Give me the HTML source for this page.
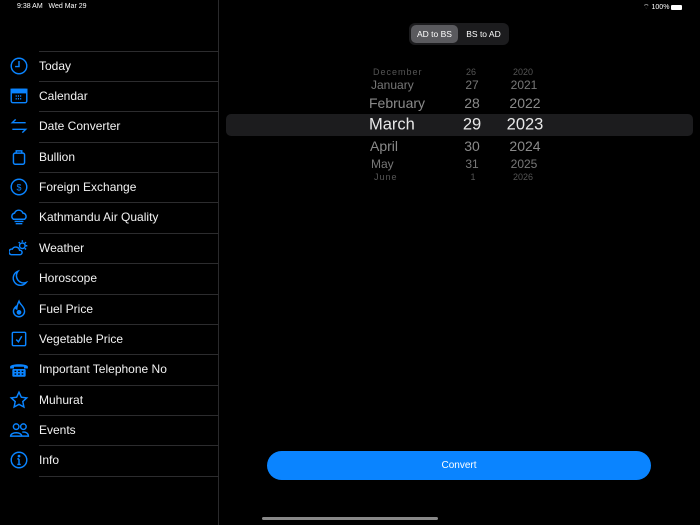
<!DOCTYPE html>
<html><head><meta charset="utf-8"><style>
*{margin:0;padding:0;box-sizing:border-box}
body{width:700px;height:525px;background:#000;font-family:"Liberation Sans",sans-serif;color:#fff;position:relative;overflow:hidden}
.sb{position:absolute;left:0;top:0;width:219px;height:525px;border-right:1px solid #2a2a2c}
.st{position:absolute;top:3px;font-size:7px;color:#fff}
.row{position:absolute;left:0;width:219px;height:30px}
.row .t{position:absolute;left:39px;top:50%;transform:translateY(-50%);font-size:12px;color:#f2f2f2}
.row svg{position:absolute;left:9px;top:5px;width:20px;height:20px;fill:none;stroke:#0a84ff;stroke-width:1.3}
.sep{position:absolute;left:39px;width:180px;height:1px;background:#2c2c2e}
.seg{position:absolute;left:409px;top:23px;width:100px;height:22px;background:#1c1c1e;border-radius:6px}
.seg div{position:absolute;top:2px;height:18px;font-size:8.5px;line-height:18px;text-align:center}
.hl{position:absolute;left:226px;top:114px;width:467px;height:22px;background:#1c1c1e;border-radius:5px}
.p{position:absolute;white-space:nowrap;transform:translate(-50%,-50%)}
.m{position:absolute;white-space:nowrap;transform:translateY(-50%)}
.btn{position:absolute;left:267px;top:451px;width:384px;height:29px;background:#0a84ff;border-radius:15px;text-align:center;line-height:29px;font-size:10px}
.home{position:absolute;left:262px;top:517px;width:176px;height:3px;border-radius:2px;background:#888}
</style></head><body>
<div class="sb">
<div class="st" style="left:17px">9:38 AM&nbsp;&nbsp;&nbsp;Wed Mar 29</div>
<div class="sep" style="top:51px"></div>
<div class="row" style="top:51px"><svg viewBox="0 0 18 18"><circle cx="9" cy="9" r="7"/><path d="M9 4.5V9.5H5.5"/></svg><span class="t">Today</span></div>
<div class="sep" style="top:81px"></div>
<div class="row" style="top:81px"><svg viewBox="0 0 18 18"><rect x="2" y="3" width="14" height="12" rx="1.5"/><rect x="2" y="3" width="14" height="3" fill="#0a84ff"/><path d="M6 9h6M6 11.5h6" stroke-dasharray="1 1"/></svg><span class="t">Calendar</span></div>
<div class="sep" style="top:111px"></div>
<div class="row" style="top:111px"><svg viewBox="0 0 18 18"><path d="M15 6H3l3-3M3 12h12l-3 3"/></svg><span class="t">Date Converter</span></div>
<div class="sep" style="top:142px"></div>
<div class="row" style="top:142px"><svg viewBox="0 0 18 18"><rect x="4" y="5.5" width="10" height="10" rx="1.5"/><path d="M6.5 5.5V3.5h5v2"/></svg><span class="t">Bullion</span></div>
<div class="sep" style="top:172px"></div>
<div class="row" style="top:172px"><svg viewBox="0 0 18 18"><circle cx="9" cy="9" r="7"/><text x="9" y="12" font-size="8" text-anchor="middle" fill="#0a84ff" stroke="none">$</text></svg><span class="t">Foreign Exchange</span></div>
<div class="sep" style="top:202px"></div>
<div class="row" style="top:202px"><svg viewBox="0 0 18 18"><path d="M4 11a3 3 0 0 1 1-5.5 4 4 0 0 1 7.5 0A3 3 0 0 1 14 11ZM5 13h8M6 15h6"/></svg><span class="t">Kathmandu Air Quality</span></div>
<div class="sep" style="top:233px"></div>
<div class="row" style="top:233px"><svg viewBox="0 0 18 18"><path d="M2 15a2.5 2.5 0 0 1 1-5 3.5 3.5 0 0 1 6.5 1A2 2 0 0 1 10 15Z"/><circle cx="12" cy="7" r="2.5"/><path d="M12 2v1.5M16.5 7H15M15.3 3.7l-1 1M8.7 3.7l1 1M15.3 10.3l-1-1"/></svg><span class="t">Weather</span></div>
<div class="sep" style="top:263px"></div>
<div class="row" style="top:263px"><svg viewBox="0 0 18 18"><path d="M8 3a6.5 6.5 0 0 0 7.5 10A6.5 6.5 0 1 1 8 3Z"/></svg><span class="t">Horoscope</span></div>
<div class="sep" style="top:294px"></div>
<div class="row" style="top:294px"><svg viewBox="0 0 18 18"><path d="M9 2c1 3 5 5 5 9a5 5 0 0 1-10 0c0-2 1-3 2-4 0 2 1 2 1 2 0-3 1-5 2-7Z"/><circle cx="9" cy="12" r="1.5" fill="#0a84ff"/></svg><span class="t">Fuel Price</span></div>
<div class="sep" style="top:324px"></div>
<div class="row" style="top:324px"><svg viewBox="0 0 18 18"><rect x="3" y="3" width="12" height="12" rx="1"/><path d="M6.5 9.5l2 2 3-5"/></svg><span class="t">Vegetable Price</span></div>
<div class="sep" style="top:354px"></div>
<div class="row" style="top:354px"><svg viewBox="0 0 18 18" style="fill:#0a84ff;stroke:none"><path d="M1 7c0-3 16-3 16 0v1.5h-3.5V7h-9v1.5H1Z"/><rect x="3" y="9" width="12" height="7" rx="1"/><g fill="#000"><rect x="5" y="10.5" width="1.5" height="1.2"/><rect x="8.2" y="10.5" width="1.5" height="1.2"/><rect x="11.4" y="10.5" width="1.5" height="1.2"/><rect x="5" y="13" width="1.5" height="1.2"/><rect x="8.2" y="13" width="1.5" height="1.2"/><rect x="11.4" y="13" width="1.5" height="1.2"/></g></svg><span class="t">Important Telephone No</span></div>
<div class="sep" style="top:385px"></div>
<div class="row" style="top:385px"><svg viewBox="0 0 18 18"><path d="M9 2l2.1 4.5 4.9.6-3.6 3.3 1 4.9L9 12.9l-4.4 2.4 1-4.9L2 7.1l4.9-.6Z"/></svg><span class="t">Muhurat</span></div>
<div class="sep" style="top:415px"></div>
<div class="row" style="top:415px"><svg viewBox="0 0 18 18" style="left:8px;width:23px"><circle cx="6" cy="6" r="2.5"/><circle cx="12.5" cy="6" r="2.5"/><path d="M1 14.5c0-4 10-4 10 0ZM11.5 14.5H17c0-3-3-4-5.5-3.5"/></svg><span class="t">Events</span></div>
<div class="sep" style="top:445px"></div>
<div class="row" style="top:445px"><svg viewBox="0 0 18 18"><circle cx="9" cy="9" r="7"/><path d="M9 8v5M7.5 13h3M7.5 8H9"/><circle cx="9" cy="5.5" r=".6" fill="#0a84ff"/></svg><span class="t">Info</span></div>
<div class="sep" style="top:476px"></div>
</div>
<div class="st" style="left:643px">⌔ 100% <span style="display:inline-block;width:11px;height:5px;background:#fff;border-radius:1px;vertical-align:-1px"></span></div>
<div class="seg"><div style="left:2px;width:47px;background:#5a5a5e;border-radius:5px">AD to BS</div><div style="left:51px;width:47px">BS to AD</div></div>
<div class="hl"></div>
<div style="position:absolute;left:0;top:0">
<span class="m" style="left:373px;top:72px;color:#555;font-size:9px;letter-spacing:1px">December</span><span class="p" style="left:471px;top:72px;color:#555;font-size:9px">26</span><span class="p" style="left:523px;top:72px;color:#555;font-size:9px">2020</span>
<span class="m" style="left:371px;top:85px;color:#777;font-size:12px">January</span><span class="p" style="left:472px;top:85px;color:#777;font-size:12px">27</span><span class="p" style="left:524px;top:85px;color:#777;font-size:12px">2021</span>
<span class="m" style="left:369px;top:103px;color:#8a8a8a;font-size:14px">February</span><span class="p" style="left:472px;top:103px;color:#8a8a8a;font-size:14px">28</span><span class="p" style="left:525px;top:103px;color:#8a8a8a;font-size:14px">2022</span>
<span class="m" style="left:369px;top:125px;color:#e8e8e8;font-size:16.5px">March</span><span class="p" style="left:472px;top:125px;color:#e8e8e8;font-size:16.5px">29</span><span class="p" style="left:525px;top:125px;color:#e8e8e8;font-size:16.5px">2023</span>
<span class="m" style="left:370px;top:146px;color:#8a8a8a;font-size:14px">April</span><span class="p" style="left:472px;top:146px;color:#8a8a8a;font-size:14px">30</span><span class="p" style="left:525px;top:146px;color:#8a8a8a;font-size:14px">2024</span>
<span class="m" style="left:371px;top:164px;color:#777;font-size:12px">May</span><span class="p" style="left:472px;top:164px;color:#777;font-size:12px">31</span><span class="p" style="left:524px;top:164px;color:#777;font-size:12px">2025</span>
<span class="m" style="left:374px;top:177px;color:#555;font-size:9px;letter-spacing:1px">June</span><span class="p" style="left:473px;top:177px;color:#555;font-size:9px">1</span><span class="p" style="left:523px;top:177px;color:#555;font-size:9px">2026</span>
</div>
<div class="btn">Convert</div>
<div class="home"></div>
</body></html>
